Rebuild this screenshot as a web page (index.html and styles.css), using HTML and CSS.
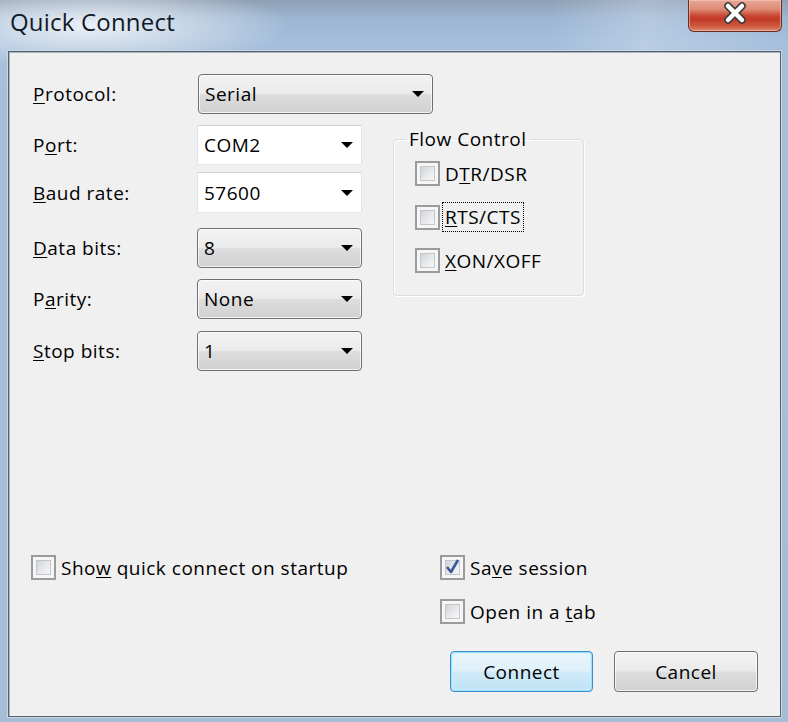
FILE: index.html
```html
<!DOCTYPE html>
<html>
<head>
<meta charset="utf-8">
<title>Quick Connect</title>
<link rel="stylesheet" href="styles.css">
</head>
<body>
<div class="window">
  <div class="titlebar">
    <span class="title">Quick Connect</span>
    <div class="close">
      <svg width="28" height="22" viewBox="0 0 28 22">
        <path d="M7 4 L21 18 M21 4 L7 18" stroke="#3a3a3a" stroke-width="7.5" stroke-linecap="round" fill="none"/>
        <path d="M7 4 L21 18 M21 4 L7 18" stroke="#ffffff" stroke-width="4.5" stroke-linecap="round" fill="none"/>
      </svg>
    </div>
  </div>
  <div class="client">
    <div class="top">
      <div class="row">
        <span class="lbl"><u>P</u>rotocol:</span>
        <div class="combo btn wide"><span>Serial</span><i class="arrow"></i></div>
      </div>
      <div class="mid">
        <div class="fields">
          <div class="row">
            <span class="lbl">P<u>o</u>rt:</span>
            <div class="combo edit"><span>COM2</span><i class="arrow"></i></div>
          </div>
          <div class="row r-baud">
            <span class="lbl"><u>B</u>aud rate:</span>
            <div class="combo edit"><span>57600</span><i class="arrow"></i></div>
          </div>
          <div class="row r-data">
            <span class="lbl"><u>D</u>ata bits:</span>
            <div class="combo btn"><span>8</span><i class="arrow"></i></div>
          </div>
          <div class="row r-parity">
            <span class="lbl">P<u>a</u>rity:</span>
            <div class="combo btn"><span>None</span><i class="arrow"></i></div>
          </div>
          <div class="row r-stop">
            <span class="lbl"><u>S</u>top bits:</span>
            <div class="combo btn"><span>1</span><i class="arrow"></i></div>
          </div>
        </div>
        <fieldset class="flow">
          <legend>Flow Control</legend>
          <div class="check"><span class="cb"></span><span class="ctext">D<u>T</u>R/DSR</span></div>
          <div class="check"><span class="cb"></span><span class="ctext focus"><u>R</u>TS/CTS</span></div>
          <div class="check"><span class="cb"></span><span class="ctext"><u>X</u>ON/XOFF</span></div>
        </fieldset>
      </div>
    </div>
    <div class="bottom">
      <div class="bottom-left">
        <div class="check"><span class="cb"></span><span class="ctext">Sho<u>w</u> quick connect on startup</span></div>
      </div>
      <div class="bottom-right">
        <div class="check"><span class="cb checked"><svg width="17" height="17" viewBox="0 0 17 17"><path d="M3 9 L7 14 L14 2" stroke="#3a5898" stroke-width="2.6" fill="none" stroke-linejoin="round"/></svg></span><span class="ctext">Sa<u>v</u>e session</span></div>
        <div class="check c-tab"><span class="cb"></span><span class="ctext">Open in a <u>t</u>ab</span></div>
        <div class="buttons">
          <div class="button default">Connect</div>
          <div class="button">Cancel</div>
        </div>
      </div>
    </div>
  </div>
</div>
</body>
</html>
```
FILE: styles.css
```css
html, body {
  margin: 0;
  padding: 0;
}
body {
  width: 788px;
  height: 722px;
  overflow: hidden;
  font-family: "Open Sans", "Noto Sans", "DejaVu Sans", sans-serif;
  font-size: 19px;
  letter-spacing: 0.5px;
  color: #000;
}
u {
  text-decoration: underline;
  text-underline-offset: 2px;
}
.window {
  width: 788px;
  height: 722px;
  display: flex;
  flex-direction: column;
  background:
    radial-gradient(ellipse 200px 44px at 90px 26px, rgba(238, 242, 247, 0.97), rgba(238, 242, 247, 0) 100%),
    linear-gradient(180deg, #8e9fb3 0px, #9db6d2 18px, #a4bedb 40px, #a7bfd9 60px, #a6bdd6 100%);
}
.titlebar {
  height: 51px;
  display: flex;
  align-items: flex-start;
  background: linear-gradient(90deg, rgba(255,255,255,0) 0%, rgba(255,255,255,0) 70%, rgba(220,232,245,0.35) 82%, rgba(255,255,255,0) 100%);
}
.title {
  margin: 5px 0 0 10px;
  font-family: "Open Sans", "Noto Sans", sans-serif;
  font-size: 24px;
  letter-spacing: 0.2px;
  color: #111a26;
}
.close {
  margin-left: auto;
  margin-right: 6px;
  width: 94px;
  height: 32px;
  box-sizing: border-box;
  border: 1px solid #6b2c24;
  border-top: none;
  border-radius: 0 0 6px 6px;
  background: linear-gradient(180deg, #e7a796 0%, #dd8a75 30%, #c94a35 50%, #c23a26 62%, #cf5b42 85%, #dc8a70 100%);
  box-shadow: inset 0 0 0 1px rgba(255, 210, 200, 0.5);
  display: flex;
  align-items: center;
  justify-content: center;
  padding-bottom: 6px;
}
.client {
  flex: 1;
  margin: 0 7px 5px 8px;
  background: #f0f0f0;
  border: 1px solid #56626f;
  box-shadow: inset 1px 1px 0 #a9b4bf, 0 0 0 1px #c9d6e4;
  display: flex;
  flex-direction: column;
}
.top {
  padding: 22px 0 0 24px;
}
.row {
  display: flex;
  align-items: center;
}
.lbl {
  width: 164px;
  flex: none;
}
.combo {
  box-sizing: border-box;
  width: 165px;
  height: 40px;
  display: flex;
  align-items: center;
  padding: 0 8px 0 6px;
}
.combo.wide {
  width: 235px;
  margin-left: 1px;
}
.combo.btn {
  border: 1px solid #707070;
  border-radius: 4px;
  background: linear-gradient(180deg, #f3f3f3 0%, #ebebeb 48%, #dddddd 52%, #d0d0d0 100%);
  box-shadow: inset 0 0 0 1px rgba(255, 255, 255, 0.75);
}
.combo.edit {
  border: 1px solid #e2e6ea;
  border-top-color: #cfd3d8;
  background: #ffffff;
}
.arrow {
  margin-left: auto;
  width: 0;
  height: 0;
  border-left: 6px solid transparent;
  border-right: 6px solid transparent;
  border-top: 6px solid #000;
}
.mid {
  display: flex;
  align-items: flex-start;
  margin-top: 11px;
}
.r-baud { margin-top: 7px; }
.r-baud .combo { height: 41px; }
.r-data { margin-top: 15px; }
.r-parity { margin-top: 11px; }
.r-stop { margin-top: 12px; }
.flow {
  margin: 3px 0 0 31px;
  width: 191px;
  height: 168px;
  box-sizing: border-box;
  border: 1px solid #d5dfe5;
  border-radius: 4px;
  box-shadow: inset 1px 1px 0 #ffffff, 1px 1px 0 #ffffff;
  padding: 11px 0 0 21px;
}
.flow legend {
  padding: 0 3px;
  margin-left: -9px;
  line-height: 22px;
}
.check {
  display: flex;
  align-items: center;
  height: 25px;
}
.flow .check + .check {
  margin-top: 18.5px;
}
.cb {
  width: 25px;
  height: 25px;
  box-sizing: border-box;
  border: 2px solid #9b9b9b;
  background: #f6f6f6;
  padding: 3px;
  flex: none;
  display: flex;
  align-items: center;
  justify-content: center;
  position: relative;
}
.cb::before {
  content: "";
  display: block;
  width: 100%;
  height: 100%;
  box-sizing: border-box;
  border: 1px solid #c3c6ca;
  background: linear-gradient(135deg, #d0d3d8 0%, #e6e8ea 50%, #f7f7f7 100%);
}
.cb.checked svg {
  position: absolute;
  left: 2px;
  top: 1px;
}
.ctext {
  margin-left: 5px;
  white-space: nowrap;
}
.ctext.focus {
  outline: 1px dotted #000;
  outline-offset: 1px;
  padding: 0 1px;
  margin-left: 4px;
}
.bottom {
  margin-top: auto;
  display: flex;
  padding: 0 0 24px 22px;
}
.bottom-left {
  width: 409px;
  flex: none;
}
.bottom-right {
  display: flex;
  flex-direction: column;
}
.c-tab {
  margin-top: 19px;
}
.buttons {
  display: flex;
  gap: 21px;
  margin: 27px 0 0 10px;
}
.button {
  box-sizing: border-box;
  width: 144px;
  height: 41px;
  display: flex;
  align-items: center;
  justify-content: center;
  border: 1px solid #707070;
  border-radius: 4px;
  background: linear-gradient(180deg, #f3f3f3 0%, #ebebeb 48%, #dddddd 52%, #d0d0d0 100%);
  box-shadow: inset 0 0 0 1px rgba(255, 255, 255, 0.75);
}
.button.default {
  width: 143px;
  border-color: #3c8fd0;
  background: linear-gradient(180deg, #eaf6fc 0%, #dff1fb 48%, #cfeaf8 52%, #bfe2f4 100%);
  box-shadow: inset 0 0 0 1px #9fe0f8, inset 0 0 0 2px rgba(200, 240, 255, 0.6);
}
```
